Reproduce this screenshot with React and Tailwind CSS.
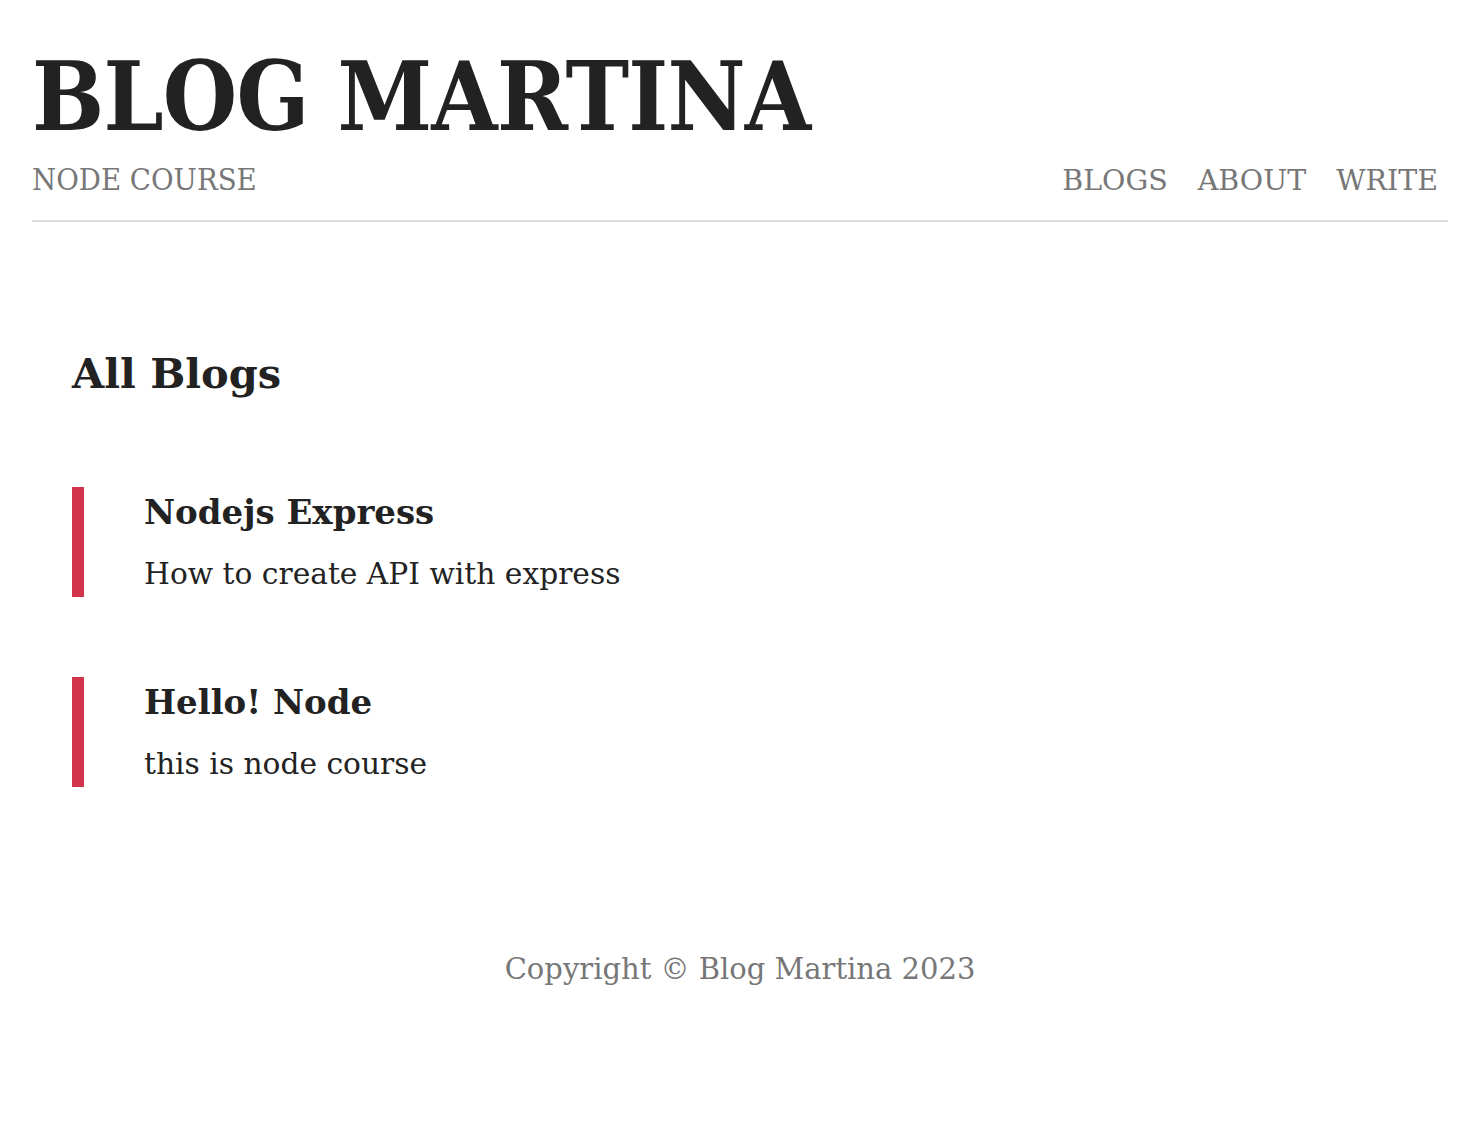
const blogs = [
  { title: "Nodejs Express", snippet: "How to create API with express" },
  { title: "Hello! Node", snippet: "this is node course" },
];

const App = () => {
  return (
    <div className="min-h-screen bg-white text-[#222] font-['DejaVu_Serif',serif]">
      {/* HEADER */}
      <header className="px-8">
        <h1 className="pt-[49px] text-[95px] leading-[1] font-bold [font-stretch:condensed] tracking-[-0.8px]">
          BLOG MARTINA
        </h1>
        <div className="flex items-baseline justify-between mt-[18px] pb-[21px] border-b-2 border-[#ddd]">
          <p className="text-[30.7px] leading-[1.2] text-[#777] [font-stretch:condensed]">NODE COURSE</p>
          <nav className="flex gap-[30px] pr-[10px] text-[28.5px] leading-[1.2] text-[#777]">
            <a>BLOGS</a>
            <a>ABOUT</a>
            <a>WRITE</a>
          </nav>
        </div>
      </header>

      {/* CONTENT */}
      <main className="px-[72px] pt-[127px]">
        <h2 className="text-[41.5px] font-bold leading-[1.2]">All Blogs</h2>

        <div className="mt-[88px] flex flex-col gap-[80px]">
          {blogs.map((b) => (
            <div key={b.title} className="border-l-[12px] border-[#d0334a] pl-[60px] h-[110px]">
              <h3 className="pt-[5px] text-[34px] font-bold leading-[1.2]">{b.title}</h3>
              <p className="mt-[24px] text-[29.7px] leading-[1.2]">{b.snippet}</p>
            </div>
          ))}
        </div>
      </main>

      {/* FOOTER */}
      <footer className="pt-[161px] text-center text-[29px] text-[#777]">
        Copyright © Blog Martina 2023
      </footer>
    </div>
  );
};

export default App;
